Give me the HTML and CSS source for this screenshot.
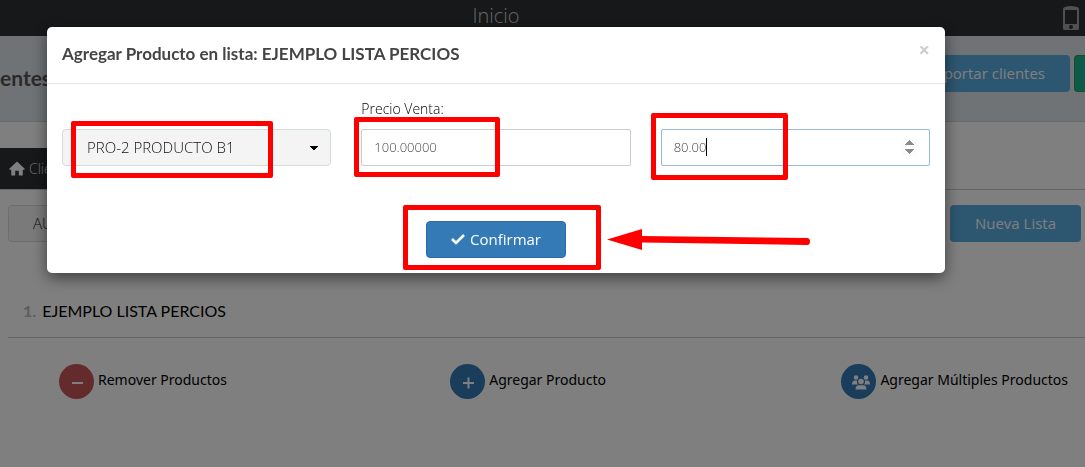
FILE: index.html
```html
<!DOCTYPE html>
<html lang="es">

<head>
    <meta charset="UTF-8">
    <meta name="viewport" content="width=device-width, initial-scale=1.0">
    <title>Inicio</title>
    <link rel="stylesheet" href="styles.css">
</head>

<body>
    <header class="topbar">
        <a class="brand" href="#">Inicio</a>
        <svg class="phone" viewBox="0 0 16 24" width="16" height="24">
            <path fill="#a0a0a0" fill-rule="evenodd" d="M0 3Q0 1.500 2 1Q8-1 14 1Q16 1.500 16 3V22.500Q16 24 14.500 24H1.500Q0 24 0 22.500ZM2 4V18H14V4ZM8 19A2 2 0 1 0 8 23A2 2 0 1 0 8 19Z"/>
        </svg>
    </header>

    <div class="page-title">
        <h1>entes</h1>
        <div class="title-actions">
            <button class="btn btn-info">Exportar clientes</button>
            <button class="btn btn-green" aria-label="Nuevo"></button>
        </div>
    </div>

    <nav class="tabs">
        <a class="tab" href="#">
            <svg viewBox="0 0 18 16" width="16" height="15">
                <path fill="#fff" d="M9 0L18 8.500L17 9.500H15.500V15Q15.500 16 14.500 16H11V10.500H7V16H3.500Q2.500 16 2.500 15V9.500H1L0 8.500Z"/>
            </svg>
            Clientes
        </a>
    </nav>

    <main>
        <div class="toolbar">
            <select class="select" aria-label="Filtro">
                <option>AU</option>
            </select>
            <button class="btn btn-info">Nueva Lista</button>
        </div>

        <h2 class="list-title"><span>1.</span> EJEMPLO LISTA PERCIOS</h2>

        <div class="list-actions">
            <a class="action" href="#">
                <span class="circle red">
                    <svg viewBox="0 0 16 16" width="16" height="16"><path d="M3 9H14" stroke="#fff" stroke-width="2"/></svg>
                </span>
                Remover Productos
            </a>
            <a class="action" href="#">
                <span class="circle">
                    <svg viewBox="0 0 16 16" width="16" height="16"><path d="M3 9H14M8.500 3.500V14.500" stroke="#fff" stroke-width="2"/></svg>
                </span>
                Agregar Producto
            </a>
            <a class="action" href="#">
                <span class="circle">
                    <svg class="users" viewBox="0 0 18 15" width="18" height="15" fill="#fff">
                        <circle cx="4" cy="2.500" r="2.300"/>
                        <circle cx="14" cy="2.500" r="2.300"/>
                        <path d="M0 9.500Q0 5.500 3 5.500H5Q4.500 8 6 9.500ZM18 9.500Q18 5.500 15 5.500H13Q13.500 8 12 9.500Z"/>
                        <circle cx="9" cy="6.500" r="2.800"/>
                        <path d="M3.500 14.500Q3.500 10.200 7 10.200H11Q14.500 10.200 14.500 14.500Z"/>
                    </svg>
                </span>
                Agregar Múltiples Productos
            </a>
        </div>
    </main>

    <div class="backdrop">
        <div class="modal" role="dialog" aria-labelledby="modal-title">
            <div class="modal-header">
                <h4 id="modal-title">Agregar Producto en lista: EJEMPLO LISTA PERCIOS</h4>
                <button class="close" aria-label="Cerrar">×</button>
            </div>
            <form class="modal-body">
                <div class="field">
                    <select class="select" aria-label="Producto">
                        <option>PRO-2 PRODUCTO B1</option>
                    </select>
                    <span class="mark mark-product"></span>
                </div>
                <div class="field">
                    <label for="precio">Precio Venta:</label>
                    <input id="precio" type="text" value="100.00000">
                    <span class="mark mark-price"></span>
                </div>
                <div class="field">
                    <input class="focused" type="number" step="0.01" value="80.00" aria-label="Precio">
                    <span class="caret"></span>
                    <span class="mark mark-amount"></span>
                </div>
            </form>
            <div class="modal-footer">
                <div class="confirm">
                    <button class="btn btn-primary">
                        <svg viewBox="0 0 14 12" width="14" height="12"><path d="M1 6L5 10L13 2" fill="none" stroke="#fff" stroke-width="2.600"/></svg>
                        Confirmar
                    </button>
                    <span class="mark mark-confirm"></span>
                    <svg class="arrow" viewBox="0 0 204 22" width="204" height="22" fill="#f00">
                        <path d="M0 10.500L35 0V7L200 9Q203 9 203 12.500Q203 16 200 16L35 13.500V21Z"/>
                    </svg>
                </div>
            </div>
        </div>
    </div>
</body>

</html>
```

FILE: styles.css
```css
* {
    box-sizing: border-box;
}

body {
    margin: 0;
    min-height: 100vh;
    background-color: #fff;
    color: #000;
    font-family: "Open Sans", sans-serif;
    font-size: 14px;
    overflow: hidden;
}

a {
    color: inherit;
    text-decoration: none;
}

h1,
h2,
h4 {
    margin: 0;
    font-family: Lato, sans-serif;
}

.topbar {
    display: flex;
    align-items: center;
    height: 36px;
    padding-right: 6px;
    background-color: #2e3033;
}

.brand {
    flex: 1;
    padding: 0 71px 4px 0;
    color: #ccc;
    font-size: 20px;
    font-weight: 300;
    line-height: 32px;
    text-align: center;
}

.page-title {
    display: flex;
    align-items: center;
    justify-content: space-between;
    height: 86px;
    padding-bottom: 10px;
    background-color: #dfe6ec;
    border-bottom: 1px solid #d0d4d6;
}

.page-title h1 {
    padding-top: 8px;
    color: #555;
    font-size: 21px;
    line-height: 30px;
}

.title-actions {
    display: flex;
    gap: 4px;
}

.btn {
    display: block;
    height: 37px;
    padding: 0 24px 2px;
    border: 1px solid transparent;
    border-radius: 4px;
    color: #fff;
    font-family: inherit;
    font-size: 15px;
    cursor: pointer;
}

.btn-info {
    background-color: #5bade0;
}

.btn-green {
    width: 11px;
    padding: 0;
    background-color: #1ab394;
    border-color: #2d9a4a;
    border-right: 0;
    border-radius: 4px 0 0 4px;
}

.btn-primary {
    display: flex;
    align-items: center;
    gap: 5px;
    background-color: #337ab7;
    border-color: #2e6da4;
}

.tabs {
    display: flex;
    margin-top: 26px;
    border-bottom: 1px solid #ccc;
}

.tab {
    display: flex;
    align-items: center;
    gap: 4px;
    height: 41px;
    padding: 0 9px;
    background-color: #2e3033;
    color: #ddd;
    font-weight: 300;
}

.toolbar {
    display: flex;
    justify-content: space-between;
    padding: 15px 4px 0 8px;
}

.select {
    height: 37px;
    padding: 0 24px 2px;
    border: 1px solid #d2dcdc;
    border-radius: 4px;
    background-color: #f4f4f4;
    color: #111;
    font-family: inherit;
    font-size: 15px;
    font-weight: 300;
    appearance: none;
}

.list-title {
    margin-left: 8px;
    padding: 57px 0 14px 15px;
    border-bottom: 1px solid #ccc;
    font-size: 16px;
    font-weight: 400;
    line-height: 24px;
}

.list-title span {
    margin-right: 2px;
    color: #bbb;
    font-weight: 700;
}

.list-actions {
    display: grid;
    grid-template-columns: 1fr 1fr auto;
    padding: 26px 17px 0 59px;
}

.action {
    display: flex;
    gap: 4px;
    font-family: "Noto Sans", sans-serif;
    line-height: 32px;
}

.circle {
    display: flex;
    align-items: center;
    justify-content: center;
    width: 35px;
    height: 35px;
    border-radius: 50%;
    background-color: #337ab7;
}

.circle.red {
    background-color: #c9575a;
}

.users {
    margin: 2px 0 0 4px;
}

.backdrop {
    position: fixed;
    inset: 0;
    padding: 27px 140px 0 47px;
    background-color: rgba(0, 0, 0, 0.5);
}

.modal {
    border-radius: 5px;
    background-color: #fff;
    box-shadow: 0 5px 15px rgba(0, 0, 0, 0.5);
}

.modal-header {
    display: flex;
    align-items: flex-start;
    justify-content: space-between;
    height: 57px;
    padding: 15px;
    border-bottom: 1px solid #e5e5e5;
}

.modal-header h4 {
    color: #444;
    font-size: 17px;
    line-height: 24px;
}

.close {
    padding: 0;
    border: 0;
    background: none;
    color: #ccc;
    font-family: inherit;
    font-size: 20px;
    font-weight: 700;
    line-height: 16px;
}

.modal-body {
    display: grid;
    grid-template-columns: repeat(3, 1fr);
    gap: 30px;
    align-items: end;
    padding: 15px 15px 0;
}

.field {
    position: relative;
    display: flex;
    flex-direction: column;
}

.field label {
    font-weight: 300;
    line-height: 20px;
    margin-bottom: 10px;
}

.field input {
    width: 100%;
    height: 37px;
    padding: 0 12px 2px;
    border: 1px solid #ccc;
    border-radius: 2px;
    color: #444;
    font-family: inherit;
    font-size: 13px;
    font-weight: 300;
    outline: none;
}

.field input.focused {
    border-color: #98b8d8;
}

.field input::-webkit-inner-spin-button {
    opacity: 1;
}

.field .select {
    background-image: conic-gradient(from 315deg at 4px 4px, #000 90deg, transparent 0);
    background-position: right 12px center;
    background-size: 8px 4px;
    background-repeat: no-repeat;
}

.caret {
    position: absolute;
    top: 9px;
    left: 45px;
    width: 1px;
    height: 18px;
    background-color: #000;
}

.modal-footer {
    display: flex;
    justify-content: center;
    padding: 55px 15px 15px;
}

.confirm {
    position: relative;
}

/* red highlights over the form */
.mark {
    position: absolute;
    border: 5px solid #f00;
    border-radius: 2px;
    pointer-events: none;
}

.mark-product {
    top: -8px;
    left: 9px;
    width: 202px;
    height: 57px;
}

.mark-price {
    bottom: -11px;
    left: -7px;
    width: 146px;
    height: 60px;
}

.mark-amount {
    top: -16px;
    left: -10px;
    width: 137px;
    height: 67px;
}

.mark-confirm {
    top: -16px;
    left: -23px;
    width: 198px;
    height: 65px;
}

.arrow {
    position: absolute;
    top: 8px;
    left: 181px;
}
```
